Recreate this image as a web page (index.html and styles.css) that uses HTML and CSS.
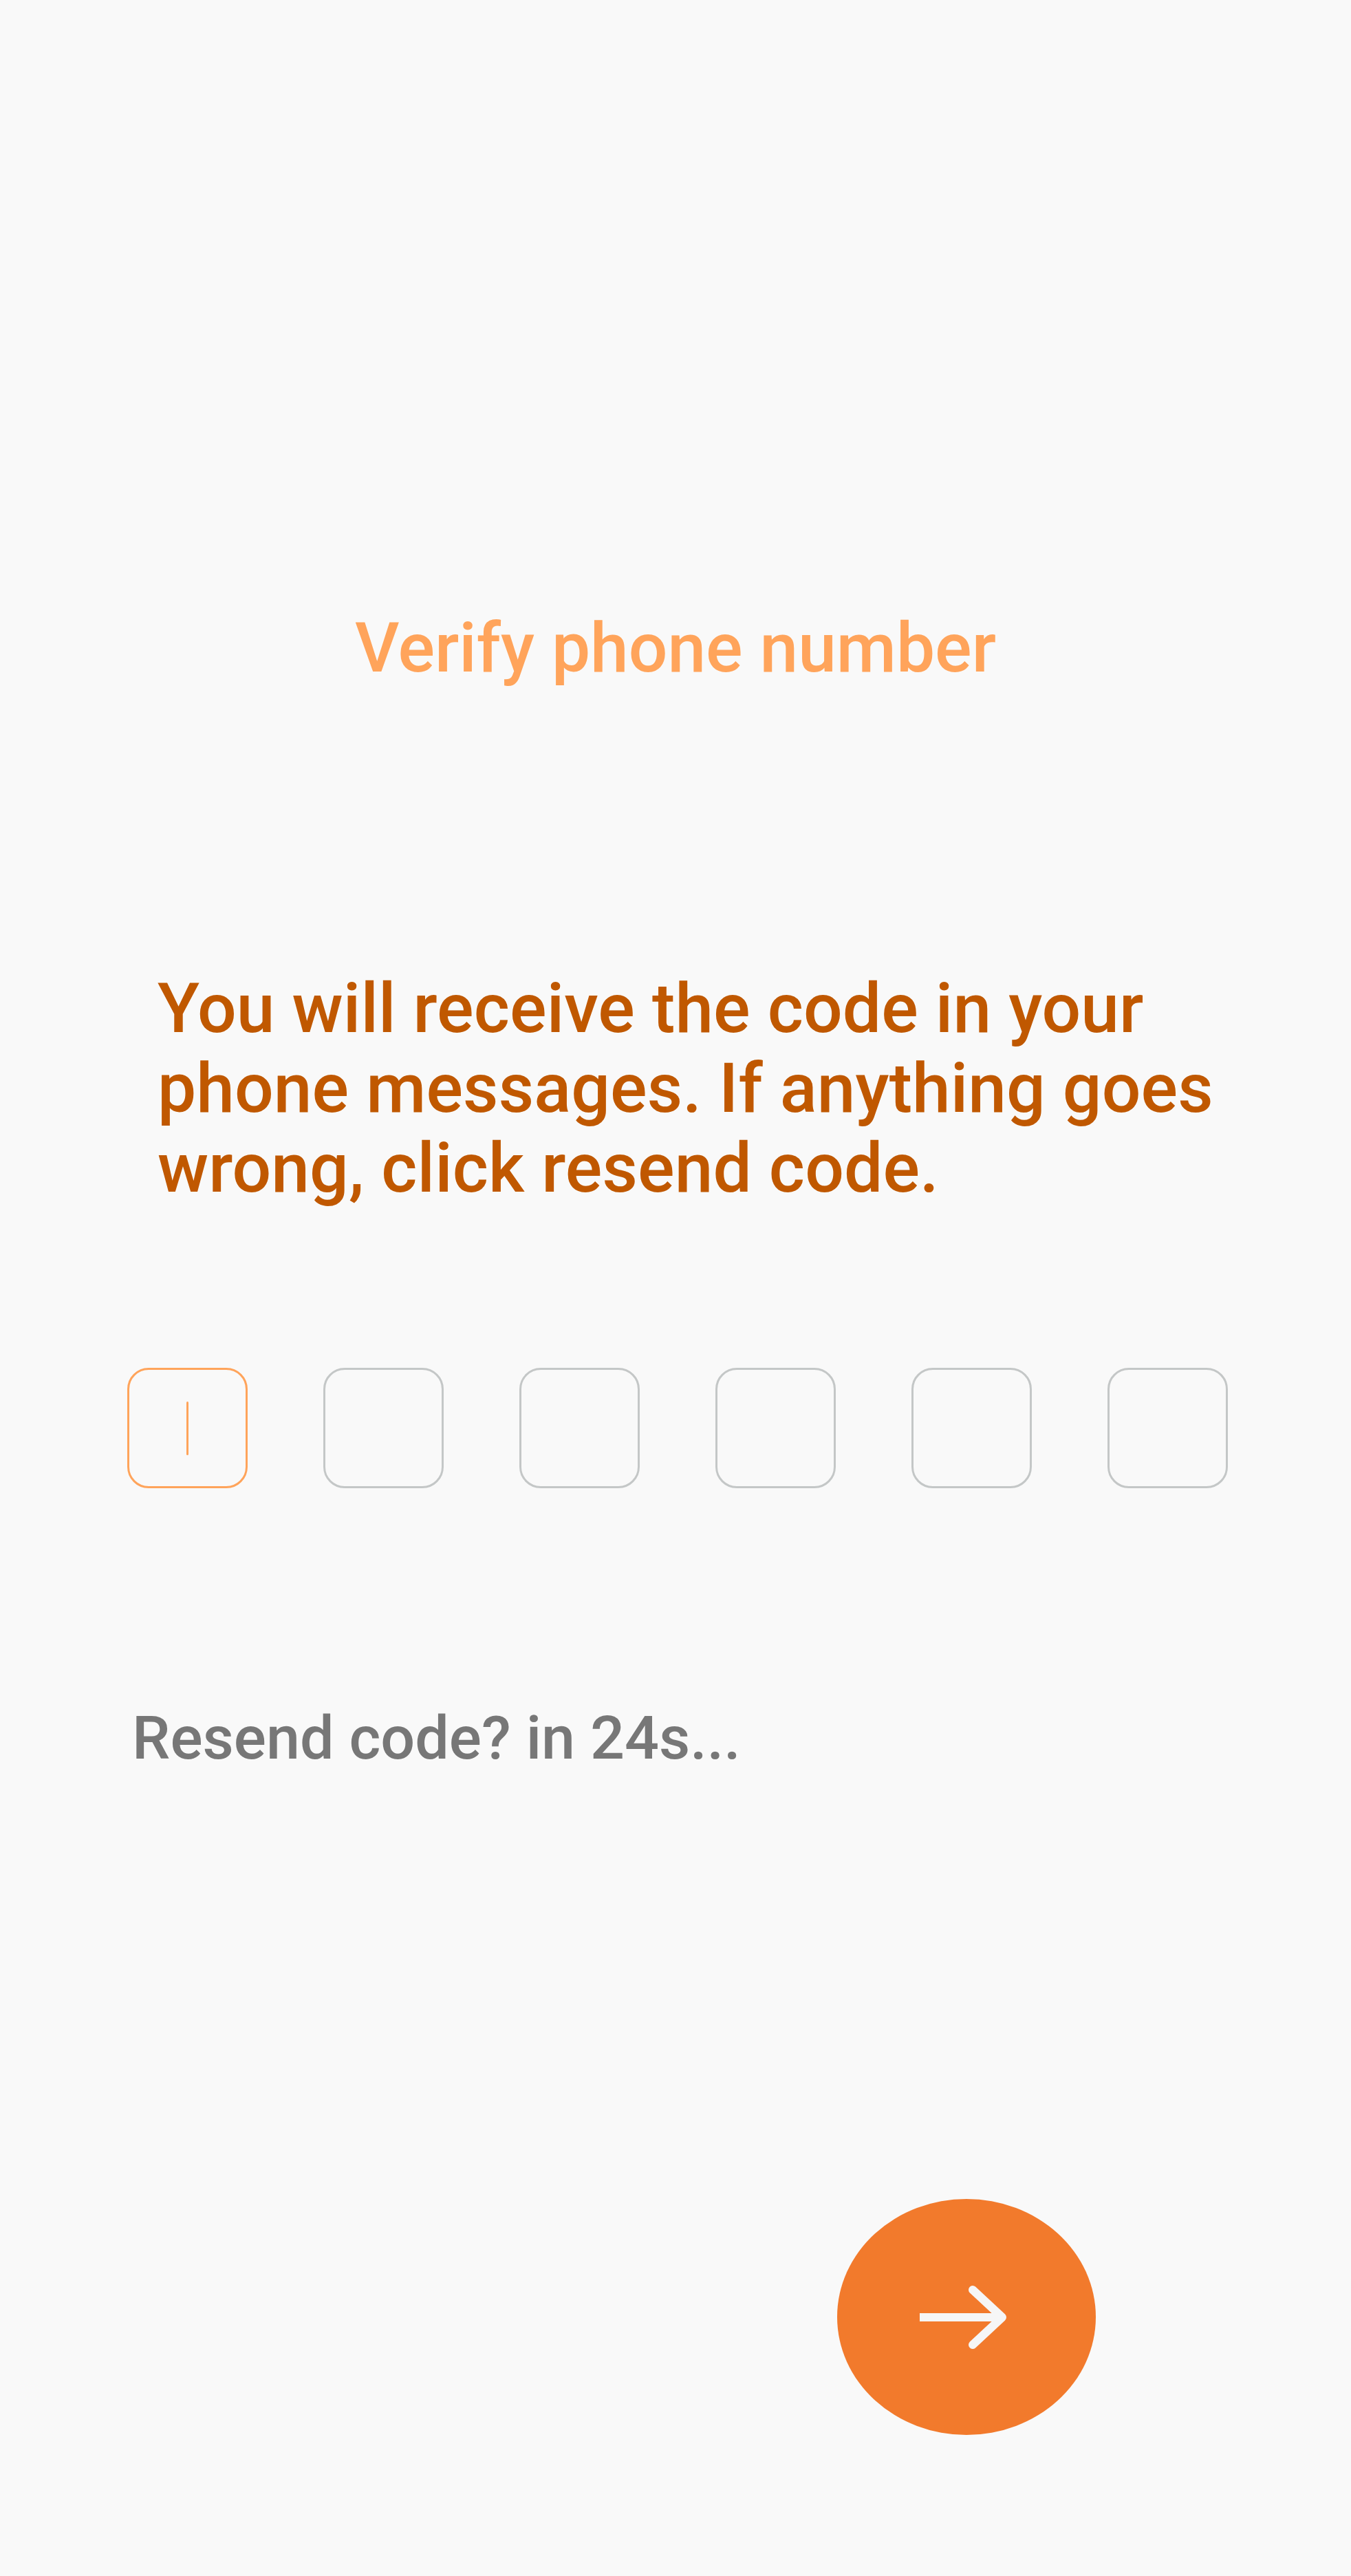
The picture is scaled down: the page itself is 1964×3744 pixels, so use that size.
FILE: index.html
```html
<!DOCTYPE html>
<html lang="en">
<head>
<meta charset="utf-8">
<title>Verify phone number</title>
<link rel="stylesheet" href="styles.css">
</head>
<body>
<main class="screen">
  <h1 class="title">Verify phone number</h1>
  <p class="intro">You will receive the code in your phone messages. If anything goes wrong, click resend code.</p>
  <div class="code-row">
    <div class="code-box active"><span class="cursor"></span></div>
    <div class="code-box"></div>
    <div class="code-box"></div>
    <div class="code-box"></div>
    <div class="code-box"></div>
    <div class="code-box"></div>
  </div>
  <p class="resend">Resend code? in 24s...</p>
  <div class="actions">
    <button class="next-btn" type="button" aria-label="Next">
      <svg class="next-icon" width="376" height="343" viewBox="0 0 376 343">
        <path d="M120 172 H236" stroke="#F6F6F6" stroke-width="12" fill="none"/>
        <path d="M197 132 L240 172 L197 212" stroke="#F6F6F6" stroke-width="12" fill="none" stroke-linecap="round" stroke-linejoin="round"/>
      </svg>
    </button>
  </div>
</main>
</body>
</html>
```

FILE: styles.css
```css
html, body {
  margin: 0;
  padding: 0;
  background: #F9F9F9;
}

body {
  font-family: Roboto, "Noto Sans", "Liberation Sans", sans-serif;
  width: 1964px;
  min-height: 3744px;
}

.screen {
  display: flex;
  flex-direction: column;
  padding-top: 883px;
}

.title {
  margin: 0;
  font-size: 100px;
  line-height: 117px;
  font-weight: 500;
  color: #FFA45B;
  text-align: center;
}

.intro {
  margin: 408px 0 0 0;
  padding-left: 229px;
  width: 1560px;
  font-size: 100px;
  line-height: 116px;
  font-weight: 500;
  letter-spacing: 0.1px;
  color: #C05800;
}

.code-row {
  display: flex;
  gap: 110px;
  margin-top: 232px;
  padding-left: 185px;
}

.code-box {
  box-sizing: border-box;
  width: 175px;
  height: 175px;
  border: 3.5px solid #C4C7C7;
  border-radius: 31px;
  display: flex;
  align-items: center;
  justify-content: center;
}

.code-box.active {
  border-color: #FFA45B;
}

.cursor {
  width: 3px;
  height: 78px;
  border-radius: 2px;
  background: #FFA45B;
}

.resend {
  margin: 311px 0 0 0;
  padding-left: 192px;
  font-size: 88px;
  line-height: 103px;
  font-weight: 500;
  color: #777777;
}

.actions {
  display: flex;
  justify-content: flex-end;
  padding-right: 371px;
  margin-top: 619px;
}

.next-btn {
  width: 376px;
  height: 343px;
  border: none;
  padding: 0;
  border-radius: 50%;
  background: #F27A2C;
  display: flex;
  align-items: center;
  justify-content: center;
  cursor: pointer;
}

.next-icon {
  display: block;
}
```
